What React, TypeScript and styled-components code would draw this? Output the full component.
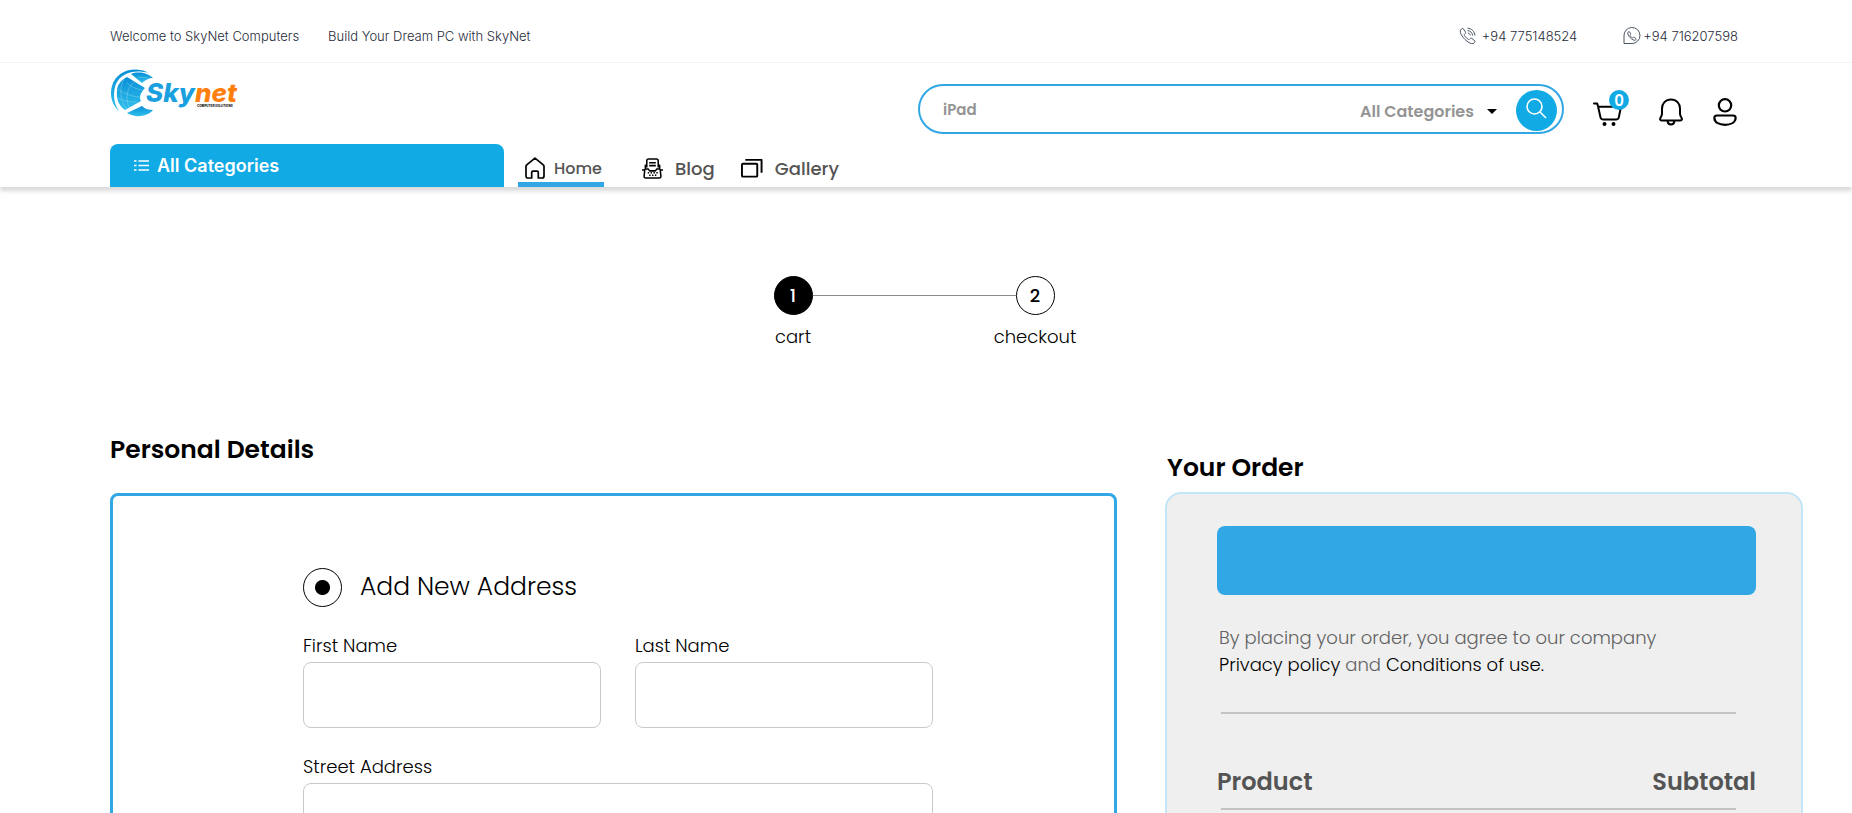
import React from "react";
import styled, { createGlobalStyle } from "styled-components";

const poppins = `Poppins, Inter, "Open Sans", sans-serif`;
const inter = `Inter, "Liberation Sans", sans-serif`;
const blue = "#32a7e6";
const sky = "#12aae4";

const GlobalStyle = createGlobalStyle`
  *, *::before, *::after { box-sizing: border-box; }
  body { margin: 0; background: #fff; color: #000; font-family: ${poppins}; }
  button, input, select { font: inherit; color: inherit; }
  a { color: inherit; text-decoration: none; }
  svg { display: block; flex: none; }
`;

const Header = styled.header`
  background: #fff;
  box-shadow: 0 4px 4px rgba(0, 0, 0, 0.15);
`;
const TopBar = styled.div`
  display: flex;
  justify-content: space-between;
  align-items: center;
  height: 63px;
  padding: 10px 114px 0 110px;
  border-bottom: 1px solid #f4f4f4;
  font: 300 13px/20px ${inter};
  color: #1f2b3b;
`;
const TopGroup = styled.div<{ $gap: number }>`
  display: flex;
  gap: ${(p) => p.$gap}px;
`;
const Contact = styled.a<{ $gap: number }>`
  display: flex;
  align-items: center;
  gap: ${(p) => p.$gap}px;
`;
const Brand = styled.div`
  display: flex;
  justify-content: space-between;
  align-items: flex-start;
  height: 81px;
  padding: 5px 115px 0 110px;
`;
const Tools = styled.div`
  display: flex;
  flex: 0 1 819px;
  gap: 29px;
  padding-top: 16px;
`;
const Search = styled.form`
  display: flex;
  flex: 1;
  align-items: center;
  height: 50px;
  padding: 0 5px 0 23px;
  border: 2px solid ${blue};
  border-radius: 25px;
  color: #949494;
  font-weight: 600;
  font-size: 16px;
`;
const SearchInput = styled.input`
  flex: 1;
  min-width: 0;
  padding: 0;
  border: 0;
  outline: 0;
  background: none;
  font-size: 15px;
  &::placeholder { color: #949494; opacity: 1; }
`;
const Picker = styled.label`
  display: flex;
  align-items: center;
  padding-top: 4px;
`;
const Select = styled.select`
  width: 127px;
  padding: 0;
  border: 0;
  outline: 0;
  background: none;
  appearance: none;
`;
const SearchButton = styled.button`
  display: grid;
  place-items: center;
  width: 41px;
  height: 41px;
  margin: 3px 0 0 19px;
  padding: 0 0 4px;
  border: 0;
  border-radius: 50%;
  background: ${sky};
`;
const IconRow = styled.div`
  display: flex;
  gap: 30px;
  padding-top: 14px;
`;
const IconButton = styled.button`
  position: relative;
  height: 28px;
  padding: 0;
  border: 0;
  background: none;
`;
const CartButton = styled(IconButton)`
  width: 36px;
`;
const Badge = styled.span`
  position: absolute;
  top: -8px;
  right: 0;
  width: 20px;
  height: 20px;
  border-radius: 50%;
  background: ${sky};
  color: #fff;
  font-weight: 600;
  font-size: 15px;
  line-height: 21px;
  text-align: center;
`;
const NavRow = styled.div`
  display: flex;
  align-items: stretch;
  height: 43px;
  padding: 0 114px 0 110px;
`;
const Categories = styled.button`
  display: flex;
  align-items: center;
  gap: 8px;
  width: 394px;
  padding: 0 24px;
  border: 0;
  border-radius: 8px 8px 0 0;
  background: ${sky};
  color: #fff;
  font: 600 18px/20px ${inter};
`;
const Nav = styled.nav`
  display: flex;
  gap: 26px;
  margin-left: 14px;
  color: #545454;
`;
const NavLink = styled.a<{ $active?: boolean }>`
  display: flex;
  align-items: center;
  gap: ${(p) => (p.$active ? 9 : 12)}px;
  margin-right: ${(p) => (p.$active ? 12 : 0)}px;
  padding: 10px ${(p) => (p.$active ? "2px 0 7px" : "0 0")};
  border-bottom: 5px solid ${(p) => (p.$active ? blue : "transparent")};
  font-weight: 500;
  font-size: ${(p) => (p.$active ? 16 : 18)}px;
`;

const Steps = styled.ol`
  display: flex;
  justify-content: center;
  align-items: flex-start;
  margin: 0;
  padding: 89px 24px 0 0;
  list-style: none;
`;
const Step = styled.li`
  display: flex;
  flex-direction: column;
  align-items: center;
  gap: 8px;
  width: 39px;
  font-weight: 300;
  font-size: 18px;
  line-height: 28px;
`;
const Dot = styled.span<{ $on?: boolean }>`
  width: 39px;
  height: 39px;
  border: 1px solid #000;
  border-radius: 50%;
  background: ${(p) => (p.$on ? "#000" : "#fff")};
  color: ${(p) => (p.$on ? "#fff" : "#000")};
  font-weight: 500;
  font-size: 18px;
  line-height: 38px;
  text-align: center;
`;
const StepLine = styled.li`
  width: 203px;
  height: 1px;
  margin-top: 19px;
  background: #8a8a8a;
`;

const Columns = styled.main`
  display: grid;
  grid-template-columns: 1007fr 638fr;
  gap: 48px;
  align-items: start;
  padding: 81px 49px 48px 110px;
`;
const OrderColumn = styled.section`
  padding-top: 18px;
`;
const Title = styled.h2<{ $gap: number; $indent?: number }>`
  margin: 0 0 ${(p) => p.$gap}px ${(p) => p.$indent ?? 0}px;
  font-weight: 600;
  font-size: 25px;
  line-height: 36px;
`;
const AddressCard = styled.form`
  display: grid;
  grid-template-columns: 1fr 1fr;
  column-gap: 34px;
  row-gap: 23px;
  padding: 71px 181px 80px 190px;
  border: 3px solid ${blue};
  border-radius: 8px;
`;
const RadioLabel = styled.label`
  display: flex;
  grid-column: 1 / -1;
  align-items: center;
  gap: 18px;
  font-weight: 300;
  font-size: 25px;
  line-height: 40px;
`;
const Radio = styled.input`
  width: 39px;
  height: 39px;
  margin: 0;
  border: 1px solid #000;
  border-radius: 50%;
  background: radial-gradient(circle, #000 7px, transparent 8px);
  appearance: none;
`;
const Field = styled.label<{ $wide?: boolean }>`
  display: flex;
  flex-direction: column;
  grid-column: ${(p) => (p.$wide ? "1 / -1" : "auto")};
  font-weight: 300;
  font-size: 18px;
  line-height: 32px;
`;
const TextInput = styled.input`
  width: 100%;
  height: 66px;
  padding: 0 16px;
  border: 1px solid #c9c9c9;
  border-radius: 8px;
  background: #fff;
`;

const OrderCard = styled.div`
  padding: 32px 45px 120px 50px;
  border: 2px solid #c3e5f8;
  border-radius: 16px;
  background: #efefef;
`;
const PlaceOrder = styled.button`
  display: block;
  width: 100%;
  height: 69px;
  border: 0;
  border-radius: 8px;
  background: ${blue};
`;
const Terms = styled.p`
  margin: 29px 0 34px 2px;
  color: #626262;
  font-weight: 300;
  font-size: 18px;
  line-height: 27px;
  a { color: #000; }
`;
const Rule = styled.hr`
  height: 2px;
  margin: 0 20px 0 4px;
  border: 0;
  background: #c3c3c3;
`;
const OrderTable = styled.table`
  width: 100%;
  margin-top: 50px;
  border-collapse: collapse;
  color: #545454;
  font-size: 24px;
  line-height: 36px;
  th { padding: 0 0 8px; font-weight: 600; text-align: left; }
  th:last-child { text-align: right; }
`;

const Logo = () => (
  <svg width="132" height="50" viewBox="0 0 132 50" role="img" aria-label="Skynet computer solutions">
    <defs>
      <linearGradient id="globe" x1="0" y1="0" x2="0" y2="1">
        <stop offset="0" stopColor="#0a8fd6" />
        <stop offset="1" stopColor="#2fc0ec" />
      </linearGradient>
    </defs>
    <g fill="url(#globe)">
      <path d="M39 5C24-3 6 3 2 18c-3 10 1 20 7 25C3 35 3 24 6 16 11 5 24 1 39 5z" />
      <path d="M21 6c7-3 17-1 22 4-4 0-8 2-11 5z" />
      <path d="M17 9l18 11c-5 5-6 10-4 13L15 42C9 38 6 31 7 23c0-6 4-11 10-14z" />
      <path d="M17 45l15-7c3 3 7 4 11 4-6 7-18 8-26 3z" />
    </g>
    <g fill="none" stroke="#9cdcf0" strokeWidth=".4">
      <path d="M24 14c-7 6-9 16-5 25M8 21c7 5 15 8 23 8M14 11c-5 9-4 20 2 30M7 30c7 3 13 4 20 4M17 15c6 5 10 6 15 7M28 9l10 1" />
    </g>
    <g fontFamily="Inter, sans-serif" fontStyle="italic" fontWeight="800">
      <text x="36" y="34" fontSize="26" fill="#1a9fdf">
        Sky<tspan fill="#ff7f0e">net</tspan>
      </text>
      <text x="87" y="39" fontSize="3" fill="#111">COMPUTER SOLUTIONS</text>
    </g>
  </svg>
);

const phonePath =
  "M1.300 3.800C0.900 6 3 9.500 5.800 12.300s6.200 4.700 8.300 4.300c1.200-.5 2.200-1.600 1.800-2.600l-3-2.600c-1.100-.6-1.800.2-2.600 1-.6.300-1.200 0-2-.7L5.900 9.200c-.7-.8-.9-1.300-.4-1.900.8-.7 1.400-1.500.8-2.500L4.100 1.500c-1-.6-2.400.9-2.800 2.300z";

const PhoneIcon = () => (
  <svg width="17" height="18" viewBox="0 0 17 18" fill="none" stroke="#4b5563" strokeWidth="1">
    <path d={phonePath} />
    <path d="M8.500 1.200c4 .2 7.200 3.400 7.400 7.400M8.700 3.600c2.700.2 4.700 2.200 4.900 4.900M8.900 6c1.300.2 2.100 1 2.300 2.300" />
  </svg>
);
const WhatsAppIcon = () => (
  <svg width="18" height="18" viewBox="0 0 18 18" fill="none" stroke="#4b5563" strokeWidth="1">
    <path d="M1 16.500V9a8 8 0 1 1 8 7.500z" />
    <path transform="translate(4 3.800) scale(.57)" strokeWidth="1.700" d={phonePath} />
  </svg>
);
const SearchIcon = () => (
  <svg width="21" height="21" viewBox="0 0 21 21" fill="none" stroke="#fff" strokeWidth="1.600">
    <circle cx="8.500" cy="8.500" r="7.500" />
    <path d="M14 14l6 6" />
  </svg>
);
const CartIcon = () => (
  <svg width="29" height="28" viewBox="0 0 29 28" fill="none" stroke="#000" strokeWidth="2" strokeLinecap="round" strokeLinejoin="round">
    <path d="M1 5.500h3.200l.8 2.700 2.500 11.200c.3 1.300 1 2 2.300 2h13.700c1.300 0 2-.7 2.300-2L28 8.800H5" />
    <circle cx="11.500" cy="26" r="1" fill="#000" />
    <circle cx="20.500" cy="26" r="1" fill="#000" />
  </svg>
);
const BellIcon = () => (
  <svg width="24" height="28" viewBox="0 0 24 28" fill="none" stroke="#000" strokeWidth="2" strokeLinejoin="round">
    <path d="M12 1.500c-5.500 0-9 4-9 9v5.300c0 1.500-.6 2.600-1.500 4-.8 1.400-.4 2.700 1 2.700h19c1.400 0 1.800-1.300 1-2.700-.9-1.400-1.500-2.500-1.500-4v-5.300c0-5-3.500-9-9-9z" />
    <path d="M8.500 23c.3 2.200 1.700 3.500 3.500 3.500s3.200-1.300 3.500-3.500" />
  </svg>
);
const UserIcon = () => (
  <svg width="24" height="28" viewBox="0 0 24 28" fill="none" stroke="#000" strokeWidth="2.200">
    <circle cx="12" cy="7.300" r="6.200" />
    <path d="M4 17.500h16c1.900 0 2.800 1.200 2.600 3-.5 4-5 6.300-10.600 6.300S1.900 24.500 1.400 20.500c-.2-1.800.7-3 2.600-3z" />
  </svg>
);
const ListIcon = () => (
  <svg width="15" height="13" viewBox="0 0 15 13" fill="none" stroke="#fff" strokeWidth="1.500">
    <path d="M0 2h2.500M0 6.500h2.500M0 11h2.500M4.500 2H15M4.500 6.500H15M4.500 11H15" />
  </svg>
);
const HomeIcon = () => (
  <svg width="20" height="22" viewBox="0 0 20 22" fill="none" stroke="#000" strokeWidth="1.700" strokeLinejoin="round">
    <path d="M1 9.500c0-.8.300-1.300 1-1.800L10 1.200l8 6.500c.7.500 1 1 1 1.800V19c0 1.200-.6 2-1.800 2h-3.900v-5.500c0-.8-.5-1.300-1.300-1.300H8c-.8 0-1.300.5-1.300 1.300V21H2.800C1.600 21 1 20.200 1 19z" />
  </svg>
);
const BlogIcon = () => (
  <svg width="21" height="21" viewBox="0 0 22 22" fill="none" stroke="#000" strokeWidth="1.600" strokeLinejoin="round">
    <path d="M5 10V3c0-1.300.7-2 2-2h8c1.300 0 2 .7 2 2v7" />
    <path d="M7.500 5h7M7.500 8h7" />
    <path d="M5 7.500H3.500v4h3l1.500 2h6l1.500-2h3v-4H17M3 11.500L2.200 19c-.1 1.300.5 2 1.800 2h14c1.300 0 1.900-.7 1.800-2L19 11.500M0 12.500h3M19 12.500h3" />
    <path d="M6 15.500h10.500M7.500 18h8" strokeDasharray="1.500 1.500" />
  </svg>
);
const GalleryIcon = () => (
  <svg width="22" height="20" viewBox="0 0 23 20" fill="none" stroke="#000" strokeWidth="2" strokeLinejoin="round">
    <rect x="1" y="5.500" width="16" height="13.500" rx="1" />
    <path d="M4.500 1.500H21.500V15" />
  </svg>
);

export default function App() {
  return (
    <>
      <GlobalStyle />
      <Header>
        <TopBar>
          <TopGroup $gap={29}>
            <span>Welcome to SkyNet Computers</span>
            <span>Build Your Dream PC with SkyNet</span>
          </TopGroup>
          <TopGroup $gap={46}>
            <Contact $gap={6} href="tel:+94775148524"><PhoneIcon />+94 775148524</Contact>
            <Contact $gap={2} href="https://wa.me/94716207598"><WhatsAppIcon />+94 716207598</Contact>
          </TopGroup>
        </TopBar>
        <Brand>
          <a href="#home"><Logo /></a>
          <Tools>
            <Search onSubmit={(e) => e.preventDefault()}>
              <SearchInput type="search" placeholder="iPad" aria-label="Search products" />
              <Picker>
                <Select aria-label="Category">
                  <option>All Categories</option>
                </Select>
                <svg width="10" height="5" viewBox="0 0 10 5"><path d="M0 0h10L5 5z" fill="#000" /></svg>
              </Picker>
              <SearchButton type="submit" aria-label="Search"><SearchIcon /></SearchButton>
            </Search>
            <IconRow>
              <CartButton aria-label="Cart"><CartIcon /><Badge>0</Badge></CartButton>
              <IconButton aria-label="Notifications"><BellIcon /></IconButton>
              <IconButton aria-label="Account"><UserIcon /></IconButton>
            </IconRow>
          </Tools>
        </Brand>
        <NavRow>
          <Categories><ListIcon />All Categories</Categories>
          <Nav>
            <NavLink $active href="#home"><HomeIcon />Home</NavLink>
            <NavLink href="#blog"><BlogIcon />Blog</NavLink>
            <NavLink href="#gallery"><GalleryIcon />Gallery</NavLink>
          </Nav>
        </NavRow>
      </Header>

      <Steps>
        <Step><Dot $on>1</Dot>cart</Step>
        <StepLine aria-hidden="true" />
        <Step><Dot>2</Dot>checkout</Step>
      </Steps>

      <Columns>
        <section>
          <Title $gap={25}>Personal Details</Title>
          <AddressCard>
            <RadioLabel><Radio type="radio" name="address" defaultChecked />Add New Address</RadioLabel>
            <Field>First Name<TextInput name="firstName" /></Field>
            <Field>Last Name<TextInput name="lastName" /></Field>
            <Field $wide>Street Address<TextInput name="street" /></Field>
          </AddressCard>
        </section>
        <OrderColumn>
          <Title $gap={6} $indent={2}>Your Order</Title>
          <OrderCard>
            <PlaceOrder aria-label="Place order" />
            <Terms>
              By placing your order, you agree to our company<br />
              <a href="#privacy">Privacy policy</a> and <a href="#conditions">Conditions of use.</a>
            </Terms>
            <Rule />
            <OrderTable>
              <thead>
                <tr><th scope="col">Product</th><th scope="col">Subtotal</th></tr>
              </thead>
            </OrderTable>
            <Rule />
          </OrderCard>
        </OrderColumn>
      </Columns>
    </>
  );
}
